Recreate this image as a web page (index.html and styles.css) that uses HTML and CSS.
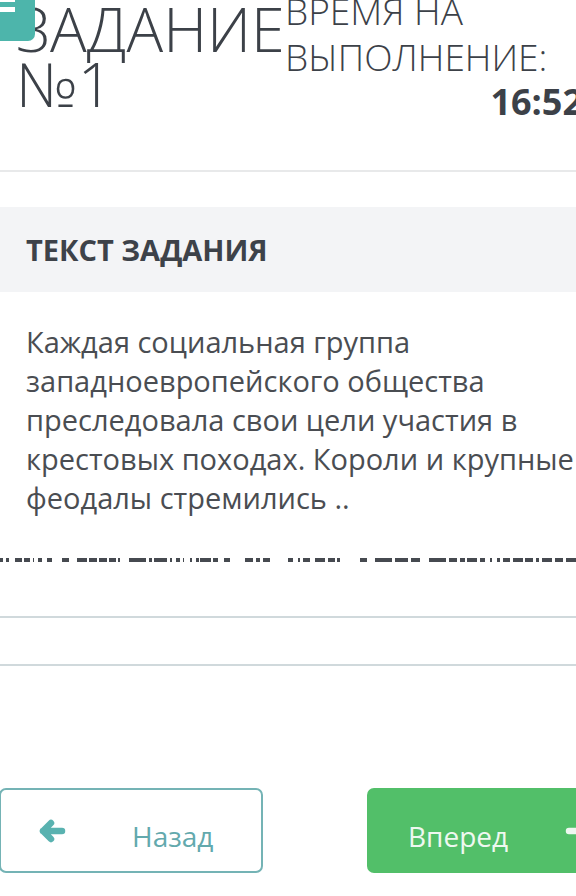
FILE: index.html
```html
<!DOCTYPE html>
<html>

<head>
  <meta charset="utf-8">
  <meta name="viewport" content="width=device-width">
  <title>Задание</title>

  <link rel="stylesheet" href="styles.css">
</head>

<body>
  <button class="menu-btn">
    <span class="bar bar-top"></span>
    <span class="bar"></span>
  </button>

<main class="page">

  <header class="task-head">
    <h1 class="task-title">ЗАДАНИЕ №1</h1>
    <div class="timer">
      <div class="timer-label">ВРЕМЯ НА ВЫПОЛНЕНИЕ:</div>
      <div class="timer-value">16:52</div>
    </div>
  </header>

  <section class="band">
    <h2>ТЕКСТ ЗАДАНИЯ</h2>
  </section>

  <p class="task-text">
    Каждая социальная группа западноевропейского общества преследовала свои цели участия в крестовых походах. Короли и крупные феодалы стремились ..
  </p>

  <!-- the row under the text is cut off, only the bottoms of the letters show -->
  <div class="cut-row">
    <svg width="576" height="4" viewBox="0 0 576 4">
      <g fill="#464a50">
        <rect x="0" y="0" width="3" height="4"/><rect x="6" y="0" width="3" height="4"/>
        <rect x="15" y="0" width="7" height="4"/><rect x="24" y="0" width="6" height="4"/>
        <rect x="33" y="0" width="1" height="4"/><rect x="38" y="0" width="4" height="4"/>
        <rect x="47" y="0" width="5" height="4"/><rect x="62" y="0" width="7" height="4"/>
        <rect x="77" y="0" width="10" height="4"/><rect x="89" y="0" width="8" height="4"/>
        <rect x="99" y="0" width="8" height="4"/><rect x="109" y="0" width="7" height="4"/>
        <rect x="118" y="0" width="2" height="4"/><rect x="129" y="0" width="17" height="4"/>
        <rect x="149" y="0" width="3" height="4"/><rect x="154" y="0" width="13" height="4"/>
        <rect x="170" y="0" width="2" height="4"/><rect x="176" y="0" width="4" height="4"/>
        <rect x="183" y="0" width="1" height="4"/><rect x="190" y="0" width="2" height="4"/>
        <rect x="196" y="0" width="3" height="4"/><rect x="200" y="0" width="11" height="4"/>
        <rect x="213" y="0" width="5" height="4"/><rect x="224" y="0" width="6" height="4"/>
        <rect x="245" y="0" width="8" height="4"/><rect x="256" y="0" width="4" height="4"/>
        <rect x="263" y="0" width="7" height="4"/><rect x="288" y="0" width="5" height="4"/>
        <rect x="298" y="0" width="2" height="4"/><rect x="303" y="0" width="7" height="4"/>
        <rect x="315" y="0" width="10" height="4"/><rect x="328" y="0" width="7" height="4"/>
        <rect x="337" y="0" width="3" height="4"/><rect x="360" y="0" width="7" height="4"/>
        <rect x="375" y="0" width="17" height="4"/><rect x="395" y="0" width="13" height="4"/>
        <rect x="411" y="0" width="9" height="4"/><rect x="429" y="0" width="17" height="4"/>
        <rect x="449" y="0" width="8" height="4"/><rect x="460" y="0" width="5" height="4"/>
        <rect x="467" y="0" width="10" height="4"/><rect x="480" y="0" width="5" height="4"/>
        <rect x="490" y="0" width="2" height="4"/><rect x="497" y="0" width="3" height="4"/>
        <rect x="503" y="0" width="7" height="4"/><rect x="513" y="0" width="10" height="4"/>
        <rect x="525" y="0" width="8" height="4"/><rect x="536" y="0" width="3" height="4"/>
        <rect x="542" y="0" width="10" height="4"/><rect x="555" y="0" width="8" height="4"/>
        <rect x="566" y="0" width="10" height="4"/>
      </g>
    </svg>
  </div>

  <div class="answer-field"></div>

  <nav class="nav-buttons">
    <button class="btn btn-back">
      <svg class="arrow" width="28" height="24" viewBox="0 0 28 24">
        <path d="M24 12H5M13 4L5 12L13 20" fill="none" stroke="currentColor" stroke-width="6.5" stroke-linecap="round" stroke-linejoin="round"/>
      </svg>
      <span>Назад</span>
    </button>

    <button class="btn btn-next">
      <span>Вперед</span>
      <svg class="arrow" width="34" height="24" viewBox="0 0 34 24">
        <path d="M4 12H29M21 4L29 12L21 20" fill="none" stroke="currentColor" stroke-width="6.5" stroke-linecap="round" stroke-linejoin="round"/>
      </svg>
    </button>
  </nav>

</main>
</body>

</html>
```

FILE: styles.css
```css
* {
    box-sizing: border-box;
  }

  html, body {
    overflow: hidden;
  }

  body {
    margin: 0;
    padding: 0;
    width: 576px;
    height: 896px;
    background-color: white;
    font-family: "Open Sans", "Noto Sans", sans-serif;
    color: #3c4148;
    position: relative;
  }

  .menu-btn {
    position: absolute;
    top: 0;
    left: 0;
    width: 35px;
    height: 41px;
    border: none;
    padding: 0;
    background-color: #4db5ab;
    border-bottom-right-radius: 7px;
    z-index: 2;
  }

  .bar {
    position: absolute;
    left: 0;
    top: 7px;
    width: 15px;
    height: 5px;
    background-color: white;
  }

  .bar-top {
    top: -3px;
  }

  .page {
    width: 640px;
  }

  .task-head {
    display: flex;
    height: 172px;
    padding-left: 16px;
    border-bottom: 2px solid #e8e9ea;
  }

  .task-title {
    flex: 0 0 269px;
    width: 269px;
    margin: 1px 0 0 0;
    font-size: 61px;
    line-height: 55px;
    font-weight: 300;
  }

  .timer {
    width: 298px;
    margin-top: -12px;
  }

  .timer-label {
    font-size: 37px;
    line-height: 46px;
    font-weight: 300;
  }

  .timer-value {
    text-align: right;
    font-size: 36px;
    line-height: 44px;
    font-weight: 700;
  }

  .band {
    display: flex;
    align-items: center;
    height: 85px;
    margin-top: 35px;
    padding-left: 26px;
    background-color: #f3f4f6;
  }

  .band h2 {
    margin: 0;
    font-size: 29px;
    font-weight: 700;
    color: #3d4249;
  }

  .task-text {
    width: 612px;
    margin: 30px 0 0 0;
    padding-left: 26px;
    font-size: 29px;
    line-height: 39px;
    color: #4a4d52;
  }

  .cut-row {
    height: 4px;
    margin-top: 41px;
  }

  .cut-row svg {
    display: block;
  }

  .answer-field {
    height: 50px;
    margin-top: 54px;
    border-top: 2px solid #d0d9dc;
    border-bottom: 2px solid #d0d9dc;
  }

  .nav-buttons {
    display: flex;
    gap: 104px;
    margin-top: 122px;
    margin-left: -1px;
  }

  .btn {
    display: flex;
    align-items: center;
    width: 264px;
    height: 85px;
    border-radius: 7px;
    font-family: "Open Sans", sans-serif;
    font-size: 28px;
    padding: 0;
  }

  .btn span {
    padding-top: 10px;
  }

  .btn-back {
    border: 2px solid #74b3b5;
    background-color: white;
    color: #63a9ad;
    padding-left: 37px;
    gap: 66px;
  }

  .btn-back .arrow {
    color: #59b2b0;
  }

  .btn-next {
    border: none;
    background-color: #52bf69;
    color: #eef8f0;
    padding-left: 41px;
    gap: 57px;
  }

  .arrow {
    display: block;
    flex: none;
  }
```
